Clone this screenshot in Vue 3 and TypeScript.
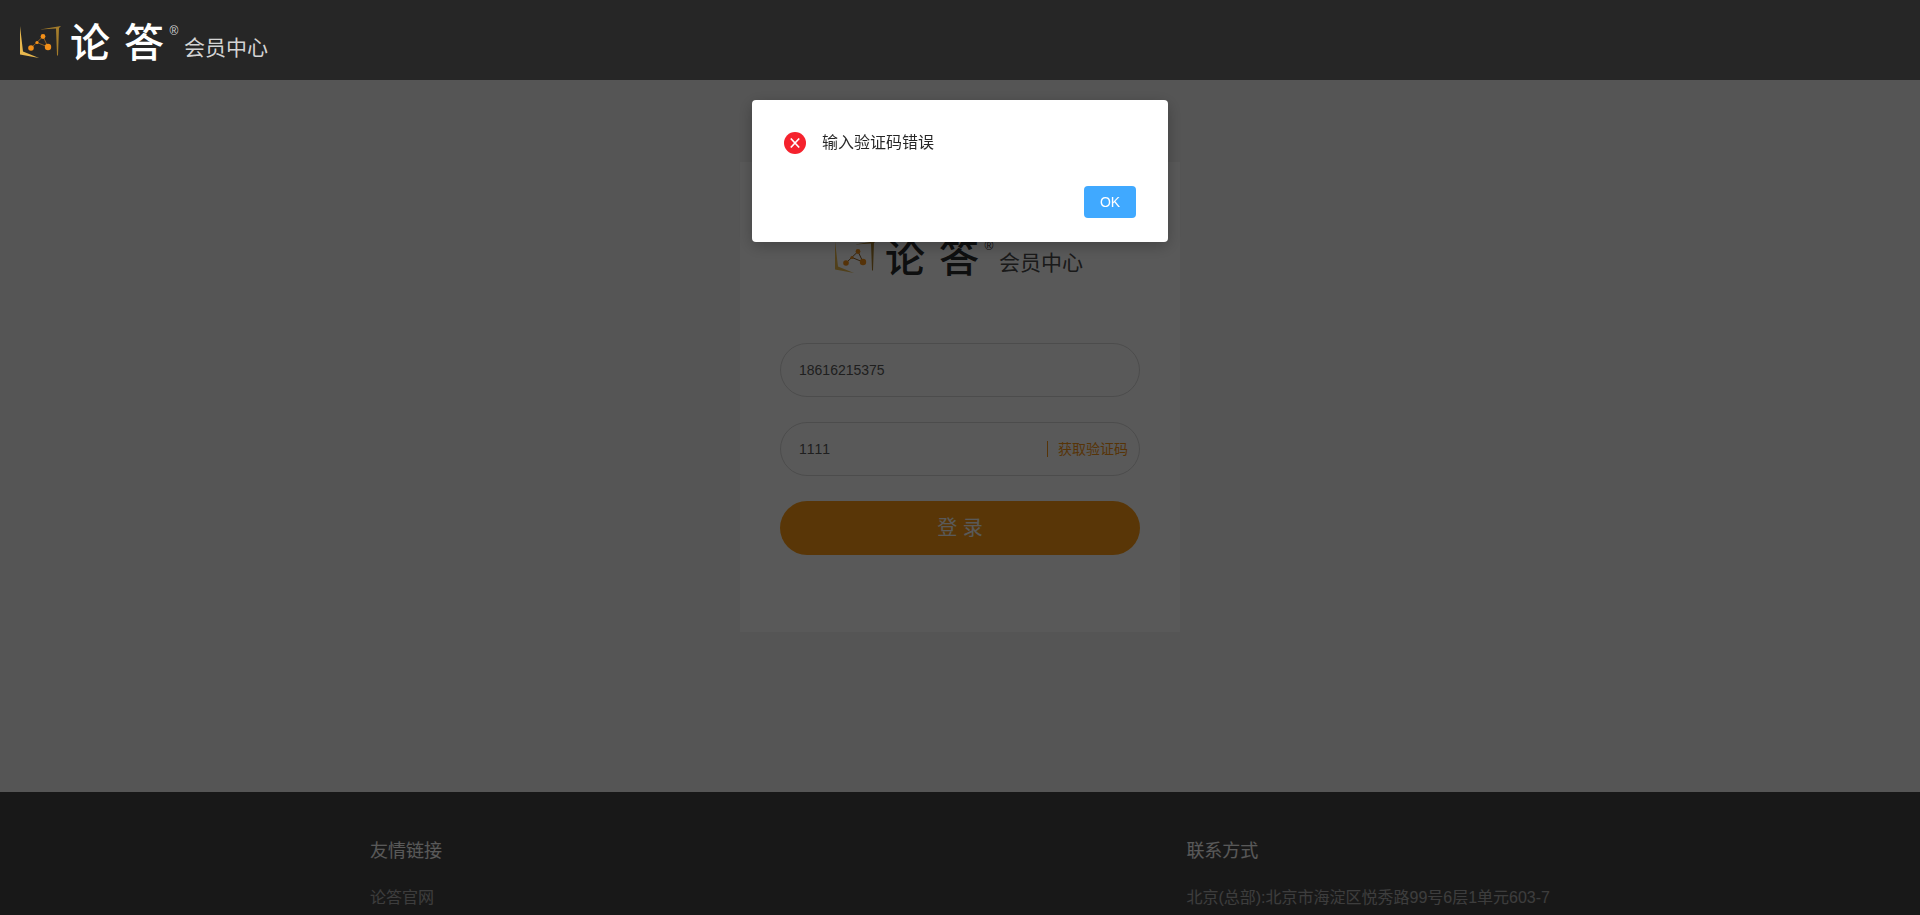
<script setup lang="ts">
import { defineComponent, h, ref } from 'vue'

const BrandLogo = defineComponent({
  name: 'BrandLogo',
  setup() {
    const dots = [
      [11, 22, 2.8],
      [17, 16.5, 1.6],
      [23, 10.5, 2.4],
      [28, 21, 3.2],
    ]
    return () =>
      h('div', { class: 'brand' }, [
        h('svg', { class: 'brand-mark', viewBox: '0 0 42 32', 'aria-hidden': 'true' }, [
          h('path', { d: 'M0 0L3 25.500L19 32L0 28.500Z', fill: '#e8b84e' }),
          h('path', { d: 'M20 3.500L41 0L39 2L38 29.500L37 29.500L36 2.500Z', fill: '#a57d2b' }),
          h('path', { d: 'M11 22L23 10.500L28 21L17 16.500', fill: 'none', stroke: '#8f5e20', 'stroke-width': '1' }),
          ...dots.map(([cx, cy, r]) => h('circle', { cx, cy, r, fill: '#f39019' })),
        ]),
        h('span', { class: 'brand-name' }, [h('span', '论'), h('span', '答')]),
        h('sup', { class: 'brand-reg' }, '®'),
        h('span', { class: 'brand-sub' }, '会员中心'),
      ])
  },
})

const phone = ref('18616215375')
const code = ref('1111')
const dialogOpen = ref(true)
</script>

<template>
  <div class="page">
    <header class="topbar"><BrandLogo /></header>

    <main class="content">
      <form class="card" @submit.prevent="dialogOpen = true">
        <BrandLogo />
        <div class="field">
          <input v-model="phone" type="tel" aria-label="手机号" />
        </div>
        <div class="field">
          <input v-model="code" type="text" aria-label="验证码" />
          <button type="button" class="get-code">获取验证码</button>
        </div>
        <button type="submit" class="login">登 录</button>
      </form>
    </main>

    <footer class="footer">
      <div class="footer-inner">
        <section>
          <h2>友情链接</h2>
          <a href="#">论答官网</a>
        </section>
        <section>
          <h2>联系方式</h2>
          <p>北京(总部):北京市海淀区悦秀路99号6层1单元603-7</p>
        </section>
      </div>
    </footer>

    <div v-if="dialogOpen" class="mask">
      <div class="dialog" role="alertdialog" aria-modal="true" aria-labelledby="dialog-title">
        <div class="dialog-body">
          <svg class="error-icon" viewBox="0 0 22 22" aria-hidden="true">
            <circle cx="11" cy="11" r="11" fill="#f5222d" />
            <path d="M6.800 6.500L15.200 15.500M15.200 6.500L6.800 15.500" stroke="#fff" stroke-width="1.700" />
          </svg>
          <span id="dialog-title">输入验证码错误</span>
        </div>
        <button type="button" class="ok" @click="dialogOpen = false">OK</button>
      </div>
    </div>
  </div>
</template>

<style>
body {
  margin: 0;
  overflow: hidden;
}

.brand {
  display: flex;
  align-items: flex-start;
  width: 250px;
  height: 32px;
  color: #fff;
  white-space: nowrap;
}

.brand-mark {
  flex: none;
  width: 42px;
  height: 32px;
  margin-right: 8px;
}

.brand-name {
  display: flex;
  gap: 14px;
  font-size: 40px;
  font-weight: 500;
  line-height: 34px;
}

.brand-reg {
  width: 20px;
  font-size: 12px;
  line-height: 10px;
  text-align: center;
}

.brand-sub {
  font-size: 21px;
  line-height: 44px;
}
</style>

<style scoped>
.page {
  display: flex;
  flex-direction: column;
  min-height: 100vh;
  background: #f3f3f3;
  color: #595959;
  font-family: "Liberation Sans", "Noto Sans CJK SC", sans-serif;
  font-size: 14px;
}

button,
input {
  font: inherit;
}

.topbar {
  position: relative;
  z-index: 2;
  box-sizing: border-box;
  height: 80px;
  padding: 26px 20px 0;
  background: #262626;
}

.topbar :deep(.brand-sub),
.topbar :deep(.brand-reg) {
  color: #d4d4d4;
}

.content {
  display: flex;
  justify-content: center;
  padding: 82px 0 160px;
}

.card {
  display: flex;
  flex-direction: column;
  gap: 25px;
  box-sizing: border-box;
  width: 440px;
  padding: 79px 40px 77px;
  background: #fff;
}

.card :deep(.brand) {
  align-self: center;
  margin-bottom: 45px;
  color: #2a2c2d;
}

.card :deep(.brand-sub) {
  color: #4a4a4a;
}

.field {
  display: flex;
  align-items: center;
  box-sizing: border-box;
  height: 54px;
  padding: 0 11px 0 18px;
  border: 1px solid #d9d9d9;
  border-radius: 27px;
}

.field input {
  flex: 1;
  min-width: 0;
  padding: 0;
  border: 0;
  outline: 0;
  background: none;
  color: #595959;
  font-kerning: none;
}

.get-code {
  padding: 0 0 0 10px;
  border: 0;
  border-left: 1px solid #fa9614;
  background: none;
  color: #fa9614;
  line-height: 16px;
}

.login {
  height: 54px;
  padding: 0 0 3px;
  border: 0;
  border-radius: 27px;
  background: #ff9c14;
  color: #fff;
  font-size: 20px;
}

.footer {
  flex: 1;
  padding: 47px 20px 0;
  background: #474747;
}

.footer-inner {
  display: flex;
  justify-content: space-between;
  max-width: 1180px;
  margin: 0 auto;
}

.footer h2 {
  margin: 0 0 23px;
  color: #fff;
  font-size: 18px;
  font-weight: 400;
  line-height: 24px;
}

.footer a,
.footer p {
  display: block;
  margin: 0;
  color: #b0b0b0;
  font-size: 16px;
  line-height: 24px;
  text-decoration: none;
}

.mask {
  position: fixed;
  inset: 0;
  z-index: 1;
  display: flex;
  align-items: flex-start;
  justify-content: center;
  padding-top: 100px;
  background: rgba(0, 0, 0, 0.65);
}

.dialog {
  display: flex;
  flex-direction: column;
  gap: 32px;
  box-sizing: border-box;
  width: 416px;
  padding: 32px 32px 24px;
  border-radius: 4px;
  background: #fff;
  box-shadow: 0 4px 16px rgba(0, 0, 0, 0.25);
}

.dialog-body {
  display: flex;
  gap: 16px;
  color: rgba(0, 0, 0, 0.85);
  font-size: 16px;
  line-height: 22px;
}

.error-icon {
  width: 22px;
  height: 22px;
}

.ok {
  align-self: flex-end;
  width: 52px;
  height: 32px;
  padding: 0;
  border: 0;
  border-radius: 4px;
  background: #40a9ff;
  color: #fff;
}
</style>
